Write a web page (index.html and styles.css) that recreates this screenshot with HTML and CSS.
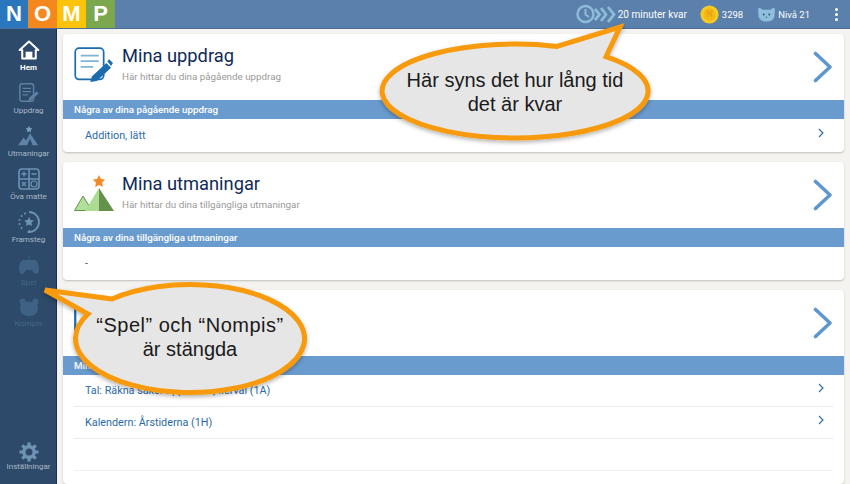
FILE: index.html
```
<!DOCTYPE html>
<html lang="sv">
<head>
<meta charset="utf-8">
<title>Nomp</title>
<link rel="stylesheet" href="styles.css">
</head>
<body>
<div class="app">
  <header class="topbar">
    <div class="logo">
      <span class="logo-n">N</span><span class="logo-o">O</span><span class="logo-m">M</span><span class="logo-p">P</span>
    </div>
    <div class="status">
      <div class="stat stat-time">
        <svg class="ic-time" viewBox="0 0 40 20"><circle cx="9.500" cy="10" r="8" fill="none" stroke="#8fbcd8" stroke-width="2.400"/><path d="M9.500 5v5.500l3.500 2.500" fill="none" stroke="#8fbcd8" stroke-width="2"/><path d="M19 5l4.500 5.500L19 16M25 4l5 6.500-5 6.500M32 3l6 7.500-6 7.500" fill="none" stroke="#8fbcd8" stroke-width="2.800"/></svg>
        <span>20 minuter kvar</span>
      </div>
      <div class="stat stat-coin">
        <svg class="ic-coin" viewBox="0 0 20 20"><circle cx="10" cy="10" r="9.500" fill="#f9cb22"/><circle cx="10" cy="10" r="6.500" fill="#f4b817"/><text x="10" y="13" class="coin-letter">N</text></svg>
        <span>3298</span>
      </div>
      <div class="stat stat-level">
        <svg class="ic-bear" viewBox="0 0 20 16"><path d="M1 3c0-2 1.500-2.500 3-1.500L6 3h8l2-1.500c1.500-1 3-.5 3 1.500l-.5 6.500c-.5 4-4 6-8.500 6s-8-2-8.500-6z" fill="#8fbfdc"/><circle cx="7" cy="8" r="1" fill="#2d4a6b"/><circle cx="13" cy="8" r="1" fill="#2d4a6b"/><path d="M9 10.500h2l-1 1.200z" fill="#2d4a6b"/></svg>
        <span>Nivå 21</span>
      </div>
      <div class="dots"><i></i><i></i><i></i></div>
    </div>
  </header>
  <div class="body">
    <nav class="sidebar">
      <a class="nav-item active">
        <svg class="nav-ic" viewBox="0 0 26 24"><path d="M13 2L2 12h3v10h16V12h3z" fill="none" stroke="#fff" stroke-width="2.400" stroke-linejoin="round"/><path d="M9 22v-8h8v8z" fill="#fff"/></svg>
        <span>Hem</span>
      </a>
      <a class="nav-item">
        <svg class="nav-ic" viewBox="0 0 24 22"><rect x="2" y="1" width="15" height="19" rx="2.500" fill="none" stroke="#5d80a3" stroke-width="1.600"/><path d="M5 6h9M5 9.500h9M5 13h6" stroke="#5d80a3" stroke-width="1.400"/><path d="M11 20l1.500-4 8-7 2 2.500-8 7z" fill="#5d80a3"/></svg>
        <span>Uppdrag</span>
      </a>
      <a class="nav-item">
        <svg class="nav-ic" viewBox="0 0 24 22"><path d="M12 0l1.200 2.300 2.600.4-1.900 1.800.5 2.500L12 5.800 9.600 7l.5-2.500-1.900-1.800 2.600-.4z" fill="#7b9dbd"/><path d="M0 21l6-8 3 3 4-8 9 13h-6l-3-7-3 7z" fill="#5f84a8"/></svg>
        <span>Utmaningar</span>
      </a>
      <a class="nav-item">
        <svg class="nav-ic" viewBox="0 0 22 22"><rect x="1" y="1" width="20" height="20" rx="3" fill="none" stroke="#6d93b5" stroke-width="1.600"/><path d="M11 1v20M1 11h20" stroke="#6d93b5" stroke-width="1.600"/><path d="M6 3.500v5M3.500 6h5M13.500 6h5M4 14l4 4M8 14l-4 4" stroke="#6d93b5" stroke-width="1.300"/><circle cx="16" cy="16" r="3" fill="none" stroke="#6d93b5" stroke-width="1.200"/></svg>
        <span>Öva matte</span>
      </a>
      <a class="nav-item">
        <svg class="nav-ic" viewBox="0 0 22 22"><path d="M11 1a10 10 0 0 1 0 20" fill="none" stroke="#6d93b5" stroke-width="1.800"/><path d="M9 21l3-2.500v5z" fill="#6d93b5"/><path d="M11 6l1.500 3 3.300.4-2.400 2.300.6 3.300-3-1.600-3 1.600.6-3.300L6.200 9.400 9.500 9z" fill="#6d93b5"/><g fill="#6d93b5"><circle cx="7" cy="2.500" r="1"/><circle cx="3.500" cy="5" r="1"/><circle cx="1.500" cy="9" r="1"/><circle cx="1.500" cy="13" r="1"/><circle cx="3.500" cy="17" r="1"/></g></svg>
        <span>Framsteg</span>
      </a>
      <a class="nav-item off">
        <svg class="nav-ic" viewBox="0 0 22 20"><path d="M10.500 1h1v5h-1z" fill="#3f6184"/><path d="M6 5h10c3 0 5 4 5 9 0 3-1 5-3 5-2.500 0-3-4-5-4H9c-2 0-2.500 4-5 4-2 0-3-2-3-5 0-5 2-9 5-9z" fill="#3f6184"/></svg>
        <span>Spel</span>
      </a>
      <a class="nav-item off">
        <svg class="nav-ic nav-ic-bear" viewBox="0 0 20 18"><circle cx="3.500" cy="3.500" r="3" fill="#3f6184"/><circle cx="16.500" cy="3.500" r="3" fill="#3f6184"/><path d="M2 6c1-3 15-3 16 0 2 6 1 12-8 12S0 12 2 6z" fill="#3f6184"/></svg>
        <span>Nompis</span>
      </a>
      <a class="nav-item settings">
        <svg class="nav-ic" viewBox="0 0 20 20"><circle cx="10" cy="10" r="5.200" fill="none" stroke="#6f93b5" stroke-width="3.400"/><path d="M10 0.500v4M10 15.500v4M0.500 10h4M15.500 10h4M3.300 3.300l2.800 2.800M13.900 13.900l2.800 2.800M16.700 3.300l-2.800 2.800M6.100 13.900l-2.800 2.800" stroke="#6f93b5" stroke-width="3.200"/></svg>
        <span>Inställningar</span>
      </a>
    </nav>
    <main class="content">
      <section class="card">
        <div class="card-head">
          <svg class="card-ic" viewBox="0 0 42 38"><rect x="1.200" y="1.200" width="30" height="33" rx="4" fill="none" stroke="#1b6cae" stroke-width="1.800"/><path d="M7 9h19M7 15h19M7 21h13" stroke="#7db4d8" stroke-width="1.800"/><path d="M17 37l2-6 15-14 5 5-15 14z" fill="#1b6cae"/><path d="M35 15l2-2 4 4-2 3z" fill="#1b6cae"/></svg>
          <div class="card-titles">
            <h2>Mina uppdrag</h2>
            <p>Här hittar du dina pågående uppdrag</p>
          </div>
          <svg class="chev-big" viewBox="0 0 20 32"><path d="M2.500 2.500L17 16 2.500 29.500" fill="none" stroke="#5f97cf" stroke-width="3.600" stroke-linecap="round" stroke-linejoin="round"/></svg>
        </div>
        <div class="band">Några av dina pågående uppdrag</div>
        <ul class="rows">
          <li class="row row-tall"><span>Addition, lätt</span><svg class="chev-sm" viewBox="0 0 6 10"><path d="M1 1l4 4-4 4" fill="none" stroke="#2a6aa8" stroke-width="1.100"/></svg></li>
        </ul>
      </section>
      <section class="card">
        <div class="card-head">
          <svg class="card-ic" viewBox="0 0 40 36"><path d="M25 0l1.900 4 4.300.6-3.100 3 .7 4.400-3.800-2.100-3.800 2.100.7-4.400-3.100-3 4.300-.6z" fill="#f28a24"/><path d="M.5 35.500L9 21l9 14.500z" fill="#b2df99" stroke="#65924a" stroke-width="1"/><path d="M11 36L25 13v23z" fill="#acdc92"/><path d="M25 13l15 23H25z" fill="#65924a"/></svg>
          <div class="card-titles">
            <h2>Mina utmaningar</h2>
            <p>Här hittar du dina tillgängliga utmaningar</p>
          </div>
          <svg class="chev-big" viewBox="0 0 20 32"><path d="M2.500 2.500L17 16 2.500 29.500" fill="none" stroke="#5f97cf" stroke-width="3.600" stroke-linecap="round" stroke-linejoin="round"/></svg>
        </div>
        <div class="band">Några av dina tillgängliga utmaningar</div>
        <ul class="rows">
          <li class="row row-tall row-dash"><span>-</span></li>
        </ul>
      </section>
      <section class="card card-last">
        <div class="card-head">
          <svg class="card-ic" viewBox="0 0 42 38"><rect x="1.200" y="1.200" width="30" height="33" rx="3" fill="none" stroke="#1b6cae" stroke-width="2.400"/></svg>
          <div class="card-titles">
            <h2>Mina övningar</h2>
            <p>Här hittar du dina senaste övningar</p>
          </div>
          <svg class="chev-big" viewBox="0 0 20 32"><path d="M2.500 2.500L17 16 2.500 29.500" fill="none" stroke="#5f97cf" stroke-width="3.600" stroke-linecap="round" stroke-linejoin="round"/></svg>
        </div>
        <div class="band">Mina senaste övningar</div>
        <ul class="rows">
          <li class="row row-line"><span>Tal: Räkna saker upp till 10, flerval (1A)</span><svg class="chev-sm" viewBox="0 0 6 10"><path d="M1 1l4 4-4 4" fill="none" stroke="#2a6aa8" stroke-width="1.100"/></svg></li>
          <li class="row row-line"><span>Kalendern: Årstiderna (1H)</span><svg class="chev-sm" viewBox="0 0 6 10"><path d="M1 1l4 4-4 4" fill="none" stroke="#2a6aa8" stroke-width="1.100"/></svg></li>
          <li class="row row-empty"></li>
        </ul>
      </section>
    </main>
  </div>
  <svg class="bubbles" viewBox="0 0 850 484">
    <defs><filter id="sh" x="-10%" y="-10%" width="120%" height="130%"><feDropShadow dx="0" dy="2" stdDeviation="2" flood-color="#000" flood-opacity=".3"/></filter></defs>
    <path filter="url(#sh)" d="M557 46.400L620 27L606 56.700A133 47 0 1 1 557 46.400Z" fill="#e6e6e6" stroke="#f79a09" stroke-width="5" stroke-linejoin="miter"/>
    <path filter="url(#sh)" d="M112 299L45 290L88 314A114.500 54 0 1 0 112 299Z" fill="#e6e6e6" stroke="#f79a09" stroke-width="5" stroke-linejoin="miter"/>
  </svg>
  <div class="say say-time">Här syns det hur lång tid<br>det är kvar</div>
  <div class="say say-closed"><span class="say-wide">“Spel” och “Nompis”</span><br>är stängda</div>
</div>
</body>
</html>
```
FILE: styles.css
```
* { box-sizing: border-box; }
html, body { margin: 0; padding: 0; height: 100%; overflow: hidden; }
body { font-family: Roboto, "Liberation Sans", sans-serif; background: #f4f3ef; }
.app { position: relative; width: 850px; height: 484px; overflow: hidden; display: flex; flex-direction: column; }

.topbar { flex: none; height: 29px; background: #5a80ab; border-bottom: 1px solid #4b6f97; display: flex; justify-content: space-between; }
.logo { display: flex; height: 28px; }
.logo span { width: 29px; display: flex; align-items: center; justify-content: center; color: #fff; font: 700 22px "Liberation Sans", sans-serif; }
.logo .logo-n { background: #2a77be; width: 28px; }
.logo .logo-o { background: #f5871f; }
.logo .logo-m { background: #fcc30b; }
.logo .logo-p { background: #7ba84f; }
.status { display: flex; align-items: center; color: #fff; font-size: 9.500px; padding-right: 12px; }
.stat { display: flex; align-items: center; }
.stat-time span { font-size: 10px; }
.ic-time { width: 40px; height: 20px; margin-right: 2px; }
.stat-coin { margin-left: 13px; }
.ic-coin { width: 19px; height: 19px; margin-right: 3px; }
.coin-letter { font: 700 9px Roboto, sans-serif; fill: #e8a50f; text-anchor: middle; }
.stat-level { margin-left: 14px; }
.ic-bear { width: 19px; height: 15px; margin-right: 2px; }
.dots { display: flex; flex-direction: column; gap: 2px; margin-left: 25px; }
.dots i { display: block; width: 3px; height: 3px; border-radius: 50%; background: #fff; }

.body { flex: 1; display: flex; min-height: 0; }
.sidebar { flex: none; width: 57px; height: 100%; background: #2d4a6b; border-right: 1px solid #1e2a5c; display: flex; flex-direction: column; align-items: stretch; padding: 10px 0 10px 1px; }
.nav-item { height: 43px; display: flex; flex-direction: column; align-items: center; color: #aab9c9; font-size: 8px; line-height: 10px; }
.nav-item span { margin-top: 2px; }
.nav-ic { width: 22px; height: 22px; display: block; }
.nav-item.active { color: #fff; font-weight: 700; }
.nav-item.off { color: #456687; }
.nav-ic-bear { width: 20px; height: 20px; }
.settings { margin-top: auto; height: 32px; }
.settings .nav-ic { width: 20px; height: 20px; }
.settings span { margin-top: 0; }

.content { flex: 1; min-width: 0; padding: 5px 6px 0 6px; display: flex; flex-direction: column; gap: 10px; }
.card { flex: none; background: #fff; border-radius: 4px; box-shadow: 0 1px 2px rgba(0,0,0,.22); overflow: hidden; }
.card-last { flex: 1; }
.card-head { height: 66px; display: flex; align-items: center; padding: 0 11px 4px; }
.card-ic { flex: none; width: 40px; height: 36px; margin-right: 8px; }
.card-titles { flex: 1; margin-bottom: 3px; }
.card-titles h2 { margin: 0; font-size: 18.300px; font-weight: 400; line-height: 22px; color: #0f2a57; }
.card-titles p { margin: 4px 0 0; font-size: 9.800px; line-height: 12px; color: #9a9a9a; }
.chev-big { flex: none; width: 20px; height: 32px; margin-top: 4px; }
.band { height: 19px; background: #6a9bce; color: #fff; font-size: 9.800px; font-weight: 500; line-height: 19px; padding-left: 11px; }
.rows { list-style: none; margin: 0; padding: 0 11px; }
.row { height: 32px; display: flex; align-items: center; justify-content: space-between; color: #2a6aa8; font-size: 10.800px; padding: 0 9px 0 11px; }
.row-tall { height: 33px; }
.row-line { border-bottom: 1px solid #ebebeb; }
.row-empty { border-bottom: 1px solid #f1f1f1; }
.row-dash { color: #555; }
.chev-sm { width: 6px; height: 10px; flex: none; margin-top: -5px; }

.bubbles { position: absolute; left: 0; top: 0; width: 850px; height: 484px; }
.say { position: absolute; text-align: center; font: 20px/24px "Liberation Sans", Arial, sans-serif; color: #1a1a1a; white-space: nowrap; }
.say-time { left: 380px; width: 270px; top: 68px; }
.say-closed { left: 73px; width: 234px; top: 313px; }
.say-wide { letter-spacing: .5px; }
```
